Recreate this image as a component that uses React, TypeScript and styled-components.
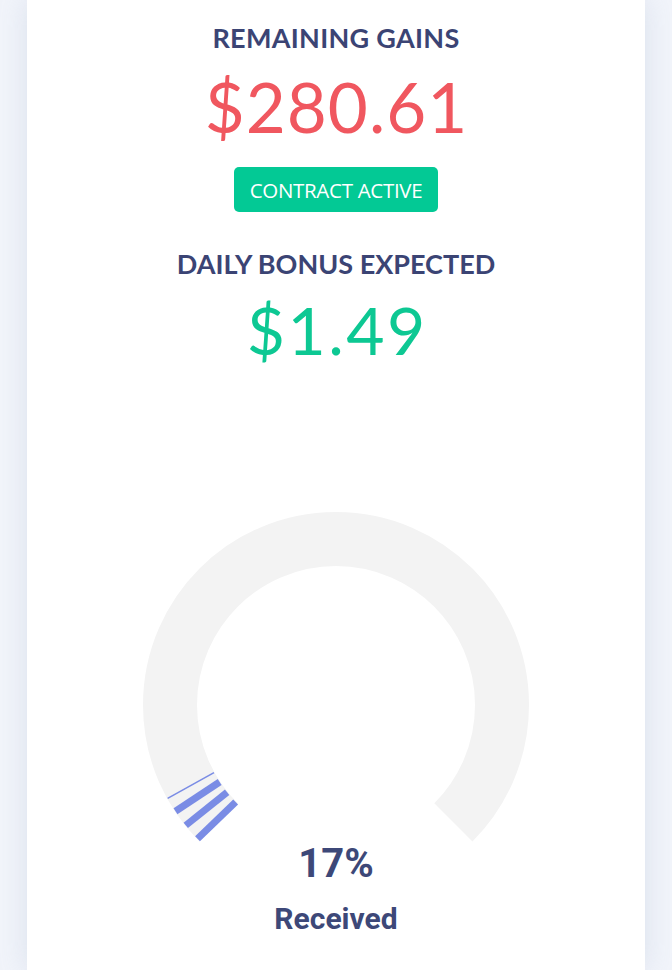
import React from "react";
import styled, { createGlobalStyle } from "styled-components";

const Global = createGlobalStyle`
  html, body { margin: 0; padding: 0; }
  body {
    background: #f1f4fa;
    font-family: "Lato", "Open Sans", sans-serif;
    height: 970px;
    overflow: hidden;
  }
`;

const Page = styled.div`
  display: flex;
  justify-content: center;
  padding: 0 27px;
  height: 970px;
`;

const Card = styled.div`
  flex: 1;
  background: #ffffff;
  box-shadow: 0 0 26px rgba(160, 175, 205, 0.28);
  display: flex;
  flex-direction: column;
  align-items: center;
  padding-top: 22px;
`;

const Label = styled.div<{ $mt?: number; $ls?: number }>`
  font-family: "Lato", sans-serif;
  font-weight: 700;
  font-size: 27px;
  line-height: 32px;
  color: #3b4474;
  letter-spacing: ${(p) => p.$ls ?? 0.3}px;
  margin-top: ${(p) => p.$mt ?? 0}px;
`;

const Amount = styled.div<{ $color: string; $size: number; $ls: number; $mt?: number }>`
  font-family: "Lato", sans-serif;
  font-weight: 400;
  font-size: ${(p) => p.$size}px;
  line-height: 1;
  color: ${(p) => p.$color};
  letter-spacing: ${(p) => p.$ls}px;
  padding-left: ${(p) => p.$ls}px;
  margin-top: ${(p) => p.$mt ?? 0}px;
`;

const Badge = styled.div`
  margin-top: 26px;
  background: #03c995;
  color: #ffffff;
  border-radius: 5px;
  height: 45px;
  width: 204px;
  display: flex;
  align-items: center;
  justify-content: center;
  font-family: "Open Sans", sans-serif;
  font-size: 20.5px;
  letter-spacing: -0.3px;
`;

const GaugeWrap = styled.div`
  position: relative;
  margin-top: 149px;
  width: 386px;
  height: 386px;
`;

const GaugeText = styled.div`
  position: absolute;
  left: 0;
  right: 0;
  top: 328px;
  display: flex;
  flex-direction: column;
  align-items: center;
  font-family: "Roboto", sans-serif;
  color: #3d4878;
`;

const Percent = styled.div`
  font-size: 40px;
  font-weight: 700;
  line-height: 48px;
`;

const Caption = styled.div`
  font-size: 30px;
  font-weight: 700;
  line-height: 36px;
  margin-top: 13px;
`;

const C = 193;
const pt = (deg: number, r: number) => {
  const a = (deg * Math.PI) / 180;
  return { x: C + r * Math.cos(a), y: C + r * Math.sin(a) };
};

const Gauge: React.FC = () => {
  const R = 166;
  const s = pt(135, R);
  const e = pt(45, R);
  const stripes = [
    { a: 136, w: 7 },
    { a: 141.3, w: 7 },
    { a: 146.5, w: 7 },
    { a: 151, w: 1.6 },
  ];
  return (
    <svg width="386" height="386" viewBox="0 0 386 386">
      <path
        d={`M ${s.x} ${s.y} A ${R} ${R} 0 1 1 ${e.x} ${e.y}`}
        fill="none"
        stroke="#f3f3f3"
        strokeWidth={54}
      />
      {stripes.map((st, i) => {
        const a = pt(st.a, 139.5);
        const b = pt(st.a, 192.5);
        return (
          <line
            key={i}
            x1={a.x}
            y1={a.y}
            x2={b.x}
            y2={b.y}
            stroke="#7a8ce5"
            strokeWidth={st.w}
          />
        );
      })}
    </svg>
  );
};

export default function App() {
  return (
    <>
      <Global />
      <Page>
        <Card>
          <Label>REMAINING GAINS</Label>
          <Amount $color="#f0575f" $size={69} $ls={1} $mt={18}>$280.61</Amount>
          <Badge>CONTRACT ACTIVE</Badge>
          <Label $mt={36} $ls={0}>DAILY BONUS EXPECTED</Label>
          <Amount $color="#0dc893" $size={66} $ls={2.5} $mt={17}>$1.49</Amount>
          <GaugeWrap>
            <Gauge />
            <GaugeText>
              <Percent>17%</Percent>
              <Caption>Received</Caption>
            </GaugeText>
          </GaugeWrap>
        </Card>
      </Page>
    </>
  );
}
